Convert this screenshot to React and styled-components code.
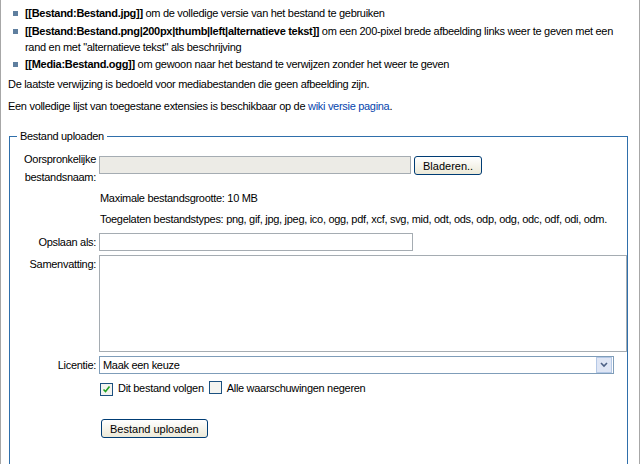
import React from "react";
import styled, { createGlobalStyle } from "styled-components";

const G = createGlobalStyle`
  html,body{margin:0;padding:0;background:#fff;}
  body{font-family:"Liberation Sans",Arial,sans-serif;font-size:11px;letter-spacing:-0.3px;color:#000;}
`;
const Page = styled.div`
  width:640px;height:464px;box-sizing:border-box;border-left:1px solid #a7a7a7;border-right:1px solid #a7a7a7;
  padding:5px 12px 0 7px;overflow:hidden;
`;
const List = styled.ul`margin:0;padding:0 0 0 17px;list-style:none;`;
const Item = styled.li`
  position:relative;line-height:16px;padding:0 0 1px 0;margin-bottom:0.5px;
  &::before{content:"";position:absolute;left:-12px;top:6px;width:5px;height:5px;background:#5f7f9f;}
`;
const P = styled.p`margin:5px 0 6px 0;line-height:16px;`;
const A = styled.a`color:#0645ad;text-decoration:none;`;
const Fieldset = styled.fieldset`
  margin:16px 0 0 1px;border:1px solid #2f6fab;padding:8px 0 30px 0;height:400px;
  legend{padding:0 3px;margin-left:7px;}
`;
const Row = styled.div`display:flex;align-items:${p=>p.top?"flex-start":"center"};margin-bottom:${p=>p.mb||4}px;`;
const Label = styled.label`width:86px;text-align:right;padding-right:3px;line-height:18px;flex:none;`;
const Field = styled.div`flex:1;`;
const Note = styled.div`margin:${p=>p.m};line-height:16px;padding-left:90px;padding-right:10px;`;
const Input = styled.div`
  width:${p=>p.w}px;height:${p=>p.h||16}px;border:1px solid #a5acb2;background:${p=>p.bg||"#fff"};box-sizing:content-box;
`;
const Btn = styled.button`
  font:inherit;height:${p=>p.h||19}px;padding:0 8px;border:1px solid #003c74;border-radius:3px;
  background:linear-gradient(#fff,#ece9d8);color:#000;
`;
const Select = styled.div`
  width:510px;height:16px;border:1px solid #7f9db9;display:flex;align-items:center;justify-content:space-between;padding-left:3px;
`;
const Arrow = styled.div`
  width:14px;height:14px;margin-right:1px;border:1px solid #b4c8e6;background:#dfe6f5;display:flex;align-items:center;justify-content:center;
`;
const Check = styled.span`
  display:inline-flex;width:11px;height:11px;border:1px solid #1c5180;background:#f4f4f0;margin:0 5px 0 3px;align-items:center;justify-content:center;vertical-align:-2px;
`;
export default function App(){
  return <Page><G/>
    <List>
      <Item><b>[[Bestand:Bestand.jpg]]</b> om de volledige versie van het bestand te gebruiken</Item>
      <Item><b>[[Bestand:Bestand.png|200px|thumb|left|alternatieve tekst]]</b> om een 200-pixel brede afbeelding links weer te geven met een rand en met "alternatieve tekst" als beschrijving</Item>
      <Item><b>[[Media:Bestand.ogg]]</b> om gewoon naar het bestand te verwijzen zonder het weer te geven</Item>
    </List>
    <P style={{marginTop:3}}>De laatste verwijzing is bedoeld voor mediabestanden die geen afbeelding zijn.</P>
    <P>Een volledige lijst van toegestane extensies is beschikbaar op de <A href="#">wiki versie pagina</A>.</P>
    <Fieldset>
      <legend>Bestand uploaden</legend>
      <Row mb={0} top>
        <Label>Oorspronkelijke bestandsnaam:</Label>
        <Field style={{display:"flex",gap:3,marginTop:6}}>
          <Input w={310} bg="#ecebe6"/><Btn>Bladeren..</Btn>
        </Field>
      </Row>
      <Note m="2px 0 0">Maximale bestandsgrootte: 10 MB</Note>
      <Note m="5px 0 6px">Toegelaten bestandstypes: png, gif, jpg, jpeg, ico, ogg, pdf, xcf, svg, mid, odt, ods, odp, odg, odc, odf, odi, odm.</Note>
      <Row><Label>Opslaan als:</Label><Input w={312}/></Row>
      <Row top><Label>Samenvatting:</Label><Input w={526} h={95}/></Row>
      <Row><Label>Licentie:</Label><Select>Maak een keuze<Arrow><svg width="8" height="6"><path d="M1 1l3 3 3-3" stroke="#4d6185" strokeWidth="1.6" fill="none"/></svg></Arrow></Select></Row>
      <Note m="6px 0 0" style={{paddingLeft:87}}>
        <Check><svg width="9" height="9"><path d="M1.5 4.5l2 2 4-5" stroke="#21a121" strokeWidth="1.6" fill="none"/></svg></Check>Dit bestand volgen
        <Check style={{marginLeft:5}}/>Alle waarschuwingen negeren
      </Note>
      <Note m="23px 0 0" style={{paddingLeft:91}}><Btn h={19}>Bestand uploaden</Btn></Note>
    </Fieldset>
  </Page>;
}
